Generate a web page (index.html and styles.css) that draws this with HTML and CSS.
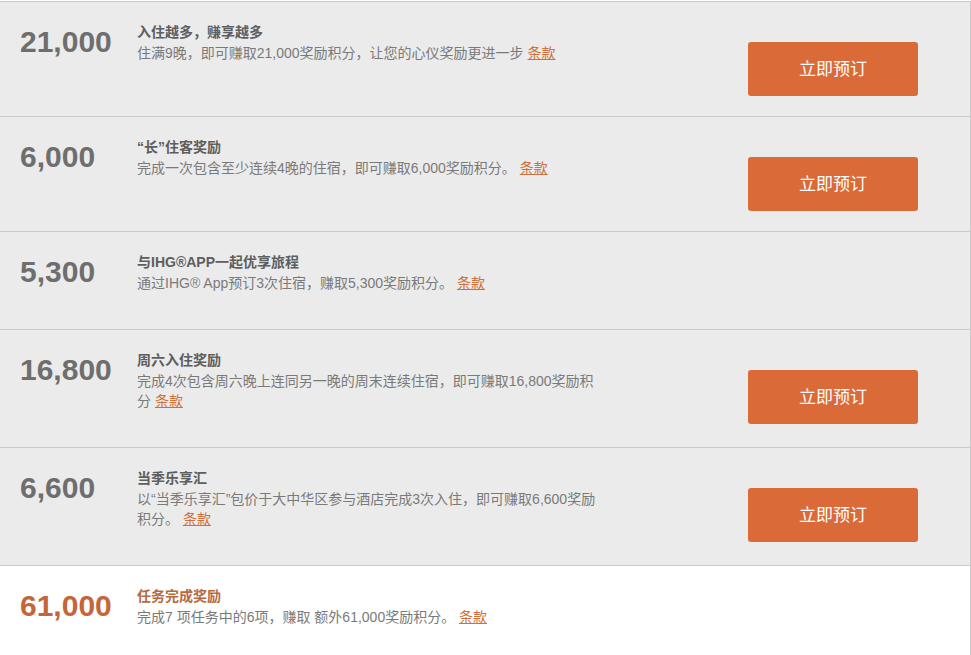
FILE: index.html
```html
<!DOCTYPE html>
<html lang="zh-CN">
<head>
  <meta charset="UTF-8">
  <title>奖励积分</title>
  <link rel="stylesheet" href="styles.css">
</head>
<body>
  <div class="offers">

    <div class="offer">
      <div class="points">21,000</div>
      <div class="info">
        <div class="title">入住越多，赚享越多</div>
        <div class="desc">住满9晚，即可赚取21,000奖励积分，让您的心仪奖励更进一步 <a href="#">条款</a></div>
      </div>
      <a class="book" href="#">立即预订</a>
    </div>

    <div class="offer">
      <div class="points">6,000</div>
      <div class="info">
        <div class="title">“长”住客奖励</div>
        <div class="desc">完成一次包含至少连续4晚的住宿，即可赚取6,000奖励积分。 <a href="#">条款</a></div>
      </div>
      <a class="book" href="#">立即预订</a>
    </div>

    <div class="offer">
      <div class="points">5,300</div>
      <div class="info">
        <div class="title">与IHG®APP一起优享旅程</div>
        <div class="desc">通过IHG® App预订3次住宿，赚取5,300奖励积分。 <a href="#">条款</a></div>
      </div>
    </div>

    <div class="offer">
      <div class="points">16,800</div>
      <div class="info">
        <div class="title">周六入住奖励</div>
        <div class="desc">完成4次包含周六晚上连同另一晚的周末连续住宿，即可赚取16,800奖励积分 <a href="#">条款</a></div>
      </div>
      <a class="book" href="#">立即预订</a>
    </div>

    <div class="offer">
      <div class="points">6,600</div>
      <div class="info">
        <div class="title">当季乐享汇</div>
        <div class="desc">以“当季乐享汇”包价于大中华区参与酒店完成3次入住，即可赚取6,600奖励积分。 <a href="#">条款</a></div>
      </div>
      <a class="book" href="#">立即预订</a>
    </div>

    <div class="offer offer-total">
      <div class="points">61,000</div>
      <div class="info">
        <div class="title">任务完成奖励</div>
        <div class="desc">完成7 项任务中的6项，赚取 额外61,000奖励积分。 <a href="#">条款</a></div>
      </div>
    </div>

  </div>
</body>
</html>
```

FILE: styles.css
```css
html, body {
  margin: 0;
  padding: 0;
  background-color: #ffffff;
}

body {
  font-family: 'Liberation Sans', 'Noto Sans CJK SC', sans-serif;
  font-size: 14px;
  color: #7a7a7a;
}

.offers {
  width: 970px;
  min-height: 654px;
  margin-top: 1px;
  border-top: 1px solid #c9c9c9;
  border-right: 1px solid #c9c9c9;
}

.offer {
  display: flex;
  align-items: flex-start;
  padding-top: 20px;
  background-color: #ebebeb;
  border-bottom: 1px solid #c9c9c9;
}

.points {
  width: 117px;
  padding-left: 20px;
  font-size: 30px;
  font-weight: bold;
  line-height: 40px;
  color: #6e6e6e;
}

.info {
  width: 466px;
  padding-bottom: 36px;
}

.title {
  font-weight: bold;
  line-height: 21px;
  color: #5e5e5e;
}

.desc {
  line-height: 20px;
}

.desc a {
  color: #cf6f3c;
  text-decoration: underline;
}

.book {
  display: flex;
  align-items: center;
  justify-content: center;
  box-sizing: border-box;
  width: 170px;
  height: 54px;
  margin: 20px 52px 20px auto;
  padding-bottom: 3px;
  background-color: #da6a37;
  border-radius: 3px;
  color: #ffffff;
  font-family: 'Noto Sans CJK SC', sans-serif;
  font-size: 17px;
  text-decoration: none;
}

.offer-total {
  background-color: #ffffff;
  border-bottom: none;
}

.offer-total .points {
  color: #c3663a;
}

.offer-total .title {
  color: #b8693f;
}
```
